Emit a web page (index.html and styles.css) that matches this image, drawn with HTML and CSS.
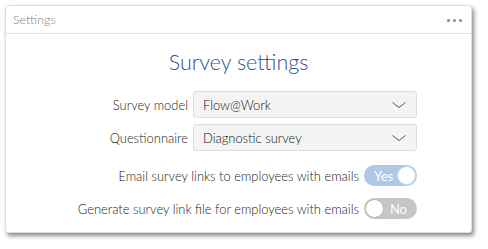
FILE: index.html
```html
<!DOCTYPE html>
<html>
<head>
<meta charset="utf-8">
<link rel="stylesheet" href="styles.css">
</head>
<body>
<div class="card">
  <div class="card-header">
    <span class="card-title">Settings</span>
    <span class="dots"><i></i><i></i><i></i></span>
  </div>
  <div class="card-body">
    <h1 class="title">Survey settings</h1>
    <div class="form">
      <div class="row">
        <label class="label">Survey model</label>
        <div class="select"><span>Flow@Work</span><svg class="chev" viewBox="0 0 14 6" width="14" height="6"><path d="M0.5 0.5 L7 5.5 L13.5 0.5" fill="none" stroke="#555" stroke-width="1"/></svg></div>
      </div>
      <div class="row">
        <label class="label">Questionnaire</label>
        <div class="select"><span>Diagnostic survey</span><svg class="chev" viewBox="0 0 14 6" width="14" height="6"><path d="M0.5 0.5 L7 5.5 L13.5 0.5" fill="none" stroke="#555" stroke-width="1"/></svg></div>
      </div>
      <div class="row toggle-row first">
        <label class="label">Email survey links to employees with emails</label>
        <div class="toggle on"><span class="tt">Yes</span><span class="knob"></span></div>
      </div>
      <div class="row toggle-row">
        <label class="label">Generate survey link file for employees with emails</label>
        <div class="toggle off"><span class="knob"></span><span class="tt">No</span></div>
      </div>
    </div>
  </div>
</div>
</body>
</html>
```
FILE: styles.css
```css
html, body {
  margin: 0;
  padding: 0;
  background: #ffffff;
}
body {
  font-family: Lato, "Liberation Sans", sans-serif;
  font-weight: 300;
  width: 488px;
  height: 249px;
  overflow: hidden;
}
.card {
  margin: 5px 0 0 5px;
  width: 465px;
  height: 226px;
  border: 1px solid #dedede;
  border-radius: 3px;
  background: #fff;
  box-shadow: 2px 3px 4px rgba(0,0,0,0.45);
}
.card-header {
  height: 27px;
  border-bottom: 1px solid #e4e4e4;
  display: flex;
  align-items: center;
  justify-content: space-between;
  padding: 0 9px 0 7px;
}
.card-title {
  font-size: 12.5px;
  color: #808080;
}
.dots {
  display: flex;
  gap: 3px;
  padding-top: 2px;
}
.dots i {
  width: 3px;
  height: 3px;
  border-radius: 50%;
  background: #8a8a8a;
  display: block;
}
.card-body {
  padding-top: 15px;
}
.title {
  margin: 0;
  text-align: center;
  font-weight: 300;
  font-size: 21.5px;
  line-height: 26px;
  color: #2f4f93;
}
.form {
  width: 357px;
  margin: 16px auto 0 auto;
  display: flex;
  flex-direction: column;
  gap: 6px;
}
.row {
  display: flex;
  justify-content: flex-end;
  align-items: center;
  gap: 5px;
  font-size: 12.9px;
  color: #222;
}
.toggle-row {
  height: 21px;
  margin-top: 6px;
}
.toggle-row.first {
  margin-top: 8px;
}
.select {
  height: 27px;
  border: 1px solid #dcdcdc;
  border-radius: 3px;
  background: #f4f4f4;
  display: flex;
  align-items: center;
  justify-content: space-between;
  padding: 0 10px 0 9px;
  box-sizing: border-box;
  width: 224px;
  color: #111;
}
.chev {
  display: block;
}
.toggle {
  width: 53px;
  height: 21px;
  border-radius: 11px;
  box-sizing: border-box;
  display: flex;
  align-items: center;
  justify-content: space-between;
  padding: 0 1px;
  font-size: 13px;
  font-weight: 400;
  color: #fff;
}
.toggle.on {
  background: #adc9e7;
  padding-left: 10px;
}
.toggle.off {
  background: #c6c6c6;
  padding-right: 10px;
}
.knob {
  width: 19px;
  height: 19px;
  box-sizing: border-box;
  border-radius: 50%;
  background: #fff;
  border: 1px solid #c9d6e6;
}
.toggle.off .knob {
  border-color: #b8b8b8;
}
```
